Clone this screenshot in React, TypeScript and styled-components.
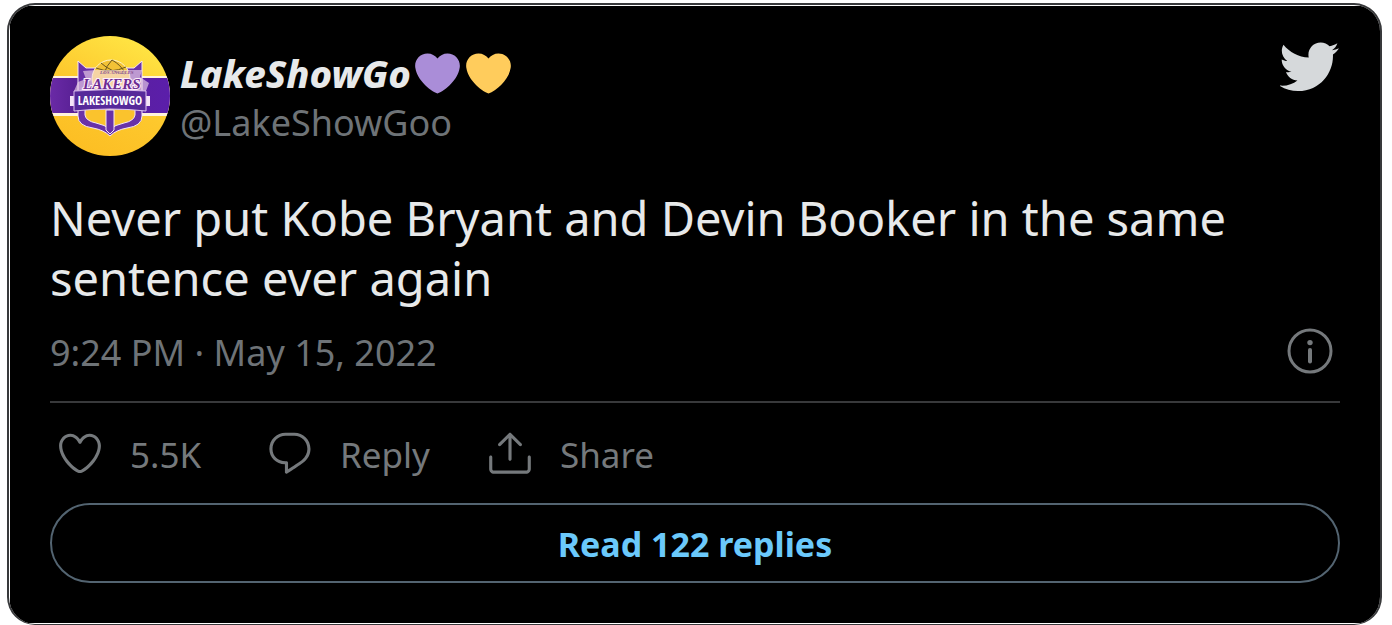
import React from "react";
import styled, { createGlobalStyle } from "styled-components";

const GlobalStyle = createGlobalStyle`
  * { box-sizing: border-box; }
  body {
    margin: 0;
    background: #ffffff;
    font-family: "Noto Sans", "Open Sans", sans-serif;
  }
`;

const Page = styled.main`
  padding: 3px 10px 0 7px;
`;

const Frame = styled.div`
  overflow: hidden;
  padding: 1px 0 1px 1px;
  border: 2px solid #38393b;
  border-bottom-width: 1px;
  border-radius: 28px;
  background: #ffffff;
`;

const Card = styled.article`
  padding: 30px 40px 40px;
  background: #000000;
`;

const Header = styled.header`
  display: flex;
  align-items: flex-start;
  gap: 10px;
`;

const Avatar = styled.svg`
  flex: none;
  width: 120px;
  height: 120px;
  border-radius: 50%;
`;

const Author = styled.div`
  display: flex;
  flex: 1;
  flex-direction: column;
  padding-top: 12px;
`;

const NameLink = styled.a`
  display: flex;
  align-items: center;
  gap: 4px;
  height: 50px;
  color: #e7e9ea;
  font-size: 38px;
  font-style: italic;
  font-weight: 800;
  line-height: 50px;
  text-decoration: none;
`;

const HeartGroup = styled.span`
  display: flex;
  gap: 6px;
`;

const HandleLink = styled.a`
  color: #6e7377;
  font-size: 36px;
  line-height: 50px;
  text-decoration: none;
`;

const LogoLink = styled.a`
  display: flex;
  color: #d6d9db;
`;

const Message = styled.p`
  margin: 32px 0 0;
  color: #e7e9ea;
  font-size: 47px;
  line-height: 60px;
`;

const Meta = styled.div`
  display: flex;
  align-items: center;
  justify-content: space-between;
  margin-top: 18px;
  padding: 0 5px 25px 0;
  border-bottom: 2px solid #38393b;
`;

const TimeLink = styled.a`
  padding-top: 4px;
  color: #6e7377;
  font-size: 36px;
  line-height: 46px;
  text-decoration: none;
`;

const IconButton = styled.button`
  display: flex;
  padding: 0;
  border: 0;
  background: none;
  color: #75797c;
`;

const Actions = styled.div`
  display: grid;
  grid-template-columns: 210px 220px auto;
  justify-content: start;
  padding: 25px 5px;
`;

const Action = styled.button`
  display: flex;
  align-items: center;
  gap: 25px;
  padding: 0;
  border: 0;
  background: none;
  color: #75797c;
  font-family: inherit;
  font-size: 35px;
  line-height: 46px;
`;

const ActionLabel = styled.span`
  padding-top: 4px;
`;

const Replies = styled.button`
  width: 100%;
  height: 80px;
  padding: 2px 0 0;
  border: 2px solid #536471;
  border-radius: 40px;
  background: none;
  color: #6bc9fb;
  font-family: inherit;
  font-size: 34px;
  font-weight: 700;
`;

const Icon = styled.svg<{ $size: number }>`
  display: block;
  flex: none;
  width: ${({ $size }) => $size}px;
  height: ${({ $size }) => $size}px;
  fill: currentColor;
`;

const HEART_EMOJI =
  "M35.885 11.833c0-5.45-4.418-9.868-9.867-9.868-3.308 0-6.227 1.633-8.018 4.129-1.791-2.496-4.71-4.129-8.017-4.129-5.45 0-9.868 4.417-9.868 9.868 0 .772.098 1.52.266 2.241C1.751 22.587 11.216 31.568 18 34.034c6.783-2.466 16.249-11.447 17.617-19.959.17-.721.268-1.469.268-2.242z";

const HeartEmoji = ({ color, label }: { color: string; label: string }) => (
  <Icon $size={45} viewBox="0 0 36 36" role="img" aria-label={label}>
    <path fill={color} d={HEART_EMOJI} />
  </Icon>
);

const BirdIcon = () => (
  <Icon $size={60} viewBox="1.2 0.3 22.8 22.8" aria-hidden="true">
    <path d="M23.643 4.937c-.835.37-1.732.62-2.675.733.962-.576 1.7-1.49 2.048-2.578-.9.534-1.897.922-2.958 1.13-.85-.904-2.06-1.47-3.4-1.47-2.572 0-4.658 2.086-4.658 4.66 0 .364.042.718.12 1.06-3.873-.195-7.304-2.05-9.602-4.868-.4.69-.63 1.49-.63 2.342 0 1.616.823 3.043 2.072 3.878-.764-.025-1.482-.234-2.11-.583v.06c0 2.257 1.605 4.14 3.737 4.568-.392.106-.803.162-1.227.162-.3 0-.593-.028-.877-.082.593 1.85 2.313 3.198 4.352 3.234-1.595 1.25-3.604 1.995-5.786 1.995-.376 0-.747-.022-1.112-.065 2.062 1.323 4.51 2.093 7.14 2.093 8.57 0 13.255-7.098 13.255-13.254 0-.2-.005-.402-.014-.602.91-.658 1.7-1.477 2.323-2.41z" />
  </Icon>
);

const InfoIcon = () => (
  <Icon $size={50} viewBox="0 0 50 50" aria-hidden="true">
    <circle cx="25" cy="25" r="21" fill="none" stroke="currentColor" strokeWidth="3" />
    <circle cx="25" cy="16.6" r="2.7" />
    <rect x="23" y="22" width="4" height="15.5" rx="2" />
  </Icon>
);

const LikeIcon = () => (
  <Icon $size={50} viewBox="0 0 24 24" aria-hidden="true">
    <path d="M12 21.638h-.014C9.403 21.59 1.95 14.856 1.95 8.478c0-3.064 2.525-5.754 5.403-5.754 2.29 0 3.83 1.58 4.646 2.73.814-1.148 2.354-2.73 4.645-2.73 2.88 0 5.404 2.69 5.404 5.755 0 6.376-7.454 13.11-10.037 13.157H12zM7.354 4.225c-2.08 0-3.903 1.988-3.903 4.255 0 5.74 7.034 11.596 8.55 11.658 1.518-.062 8.55-5.917 8.55-11.658 0-2.267-1.823-4.255-3.903-4.255-2.528 0-3.94 2.936-3.952 2.965-.23.562-1.156.562-1.387 0-.014-.03-1.425-2.965-3.954-2.965z" />
  </Icon>
);

const ReplyIcon = () => (
  <Icon $size={50} viewBox="0 0 24 24" aria-hidden="true">
    <path d="M14.046 2.242l-4.148-.01h-.002c-4.374 0-7.8 3.427-7.8 7.802 0 4.098 3.186 7.206 7.465 7.37v3.828c0 .108.044.286.12.403.142.225.384.347.632.347.138 0 .277-.038.402-.118.264-.168 6.473-4.14 8.088-5.506 1.902-1.61 3.04-3.97 3.043-6.312v-.017c-.006-4.367-3.43-7.787-7.8-7.788zm3.787 12.972c-1.134.96-4.862 3.405-6.772 4.643V16.67c0-.414-.335-.75-.75-.75h-.396c-3.66 0-6.318-2.476-6.318-5.886 0-3.534 2.768-6.302 6.3-6.302l4.147.01h.002c3.532 0 6.3 2.766 6.302 6.296-.003 1.91-.942 3.844-2.514 5.176z" />
  </Icon>
);

const ShareIcon = () => (
  <Icon $size={50} viewBox="0 0 24 24" aria-hidden="true">
    <path d="M17.53 7.47l-5-5c-.293-.293-.768-.293-1.06 0l-5 5c-.294.293-.294.768 0 1.06s.767.294 1.06 0l3.72-3.72V15c0 .414.336.75.75.75s.75-.336.75-.75V4.81l3.72 3.72c.146.147.338.22.53.22s.384-.072.53-.22c.293-.293.293-.767 0-1.06z" />
    <path d="M19.708 21.944H4.292C3.028 21.944 2 20.916 2 19.652V14c0-.414.336-.75.75-.75s.75.336.75.75v5.652c0 .437.355.792.792.792h15.416c.437 0 .792-.355.792-.792V14c0-.414.336-.75.75-.75s.75.336.75.75v5.652c0 1.264-1.028 2.292-2.292 2.292z" />
  </Icon>
);

const TeamAvatar = () => (
  <Avatar viewBox="0 0 120 120" role="img" aria-label="LakeShowGo avatar">
    <defs>
      <linearGradient id="gold" x1="0.2" y1="1" x2="0.7" y2="0">
        <stop offset="0" stopColor="#fcbd22" />
        <stop offset="0.5" stopColor="#fdc82d" />
        <stop offset="1" stopColor="#ffe544" />
      </linearGradient>
      <linearGradient id="violet" x1="0" y1="0" x2="1" y2="0">
        <stop offset="0" stopColor="#6a2aa6" />
        <stop offset="0.2" stopColor="#5a2196" />
        <stop offset="1" stopColor="#5b1eaa" />
      </linearGradient>
    </defs>
    <rect width="120" height="120" fill="url(#gold)" />
    <rect y="40" width="120" height="40" fill="#fff2dc" />
    <rect y="42" width="120" height="35" fill="url(#violet)" />
    <path
      d="M28 25l8 7h48l8-7v55q0 10-15 12-11 2-17 8-6-6-17-8-15-2-15-12z"
      fill="#6931a8"
      stroke="#f6e6f5"
      strokeWidth="1"
    />
    <path
      d="M35 73h50v6q-1 6-11 8-9 2-14 6-5-4-14-6-10-2-11-8z"
      fill="#fbc32d"
      stroke="#f6e6f5"
      strokeWidth="1"
    />
    <path d="M56 74h8v20l-4 4-4-4z" fill="#6931a8" stroke="#f6e6f5" strokeWidth="1" />
    <circle cx="61" cy="43" r="19" fill="#f2c236" stroke="#fff3c8" strokeWidth="1" />
    <path
      d="M46 32q15 6 30-1M51 27q10 9 24 11M62 24q-6 6-8 14M62 24q9 5 13 13"
      fill="none"
      stroke="#6a561f"
      strokeWidth="1"
    />
    <path d="M46 34h46l-2 7 9 6-3 8H24l4-9 8-3-3-8z" fill="#f7dfec" opacity="0.6" />
    <text x="50" y="38" fontFamily="Liberation Serif, serif" fontSize="5" fontWeight="700" fontStyle="italic" fill="#8a4f8f">
      LOS ANGELES
    </text>
    <text
      x="33"
      y="53"
      fontFamily="Liberation Serif, serif"
      fontSize="15"
      fontWeight="700"
      fontStyle="italic"
      fill="#6c2b92"
      stroke="#fdeefa"
      strokeWidth="2"
      paintOrder="stroke"
    >
      LAKERS
    </text>
    <rect x="20" y="60" width="80" height="10" fill="#f4e4f8" />
    <path d="M24 55q36-3 72 0v20q-36-4-72 0z" fill="#56299a" stroke="#dcc0ee" strokeWidth="1" />
    <text
      x="60"
      y="69"
      textAnchor="middle"
      fontFamily="Liberation Sans Narrow, Open Sans Condensed, Liberation Sans, sans-serif"
      fontSize="12"
      fontWeight="700"
      fill="#ffffff"
    >
      LAKESHOWGO
    </text>
  </Avatar>
);

export default function App() {
  return (
    <Page>
      <GlobalStyle />
      <Frame>
        <Card>
          <Header>
            <TeamAvatar />
            <Author>
              <NameLink href="#profile">
                LakeShowGo
                <HeartGroup>
                  <HeartEmoji color="#aa8dd8" label="purple heart" />
                  <HeartEmoji color="#ffcc5c" label="yellow heart" />
                </HeartGroup>
              </NameLink>
              <HandleLink href="#profile">@LakeShowGoo</HandleLink>
            </Author>
            <LogoLink href="#tweet" aria-label="View on Twitter">
              <BirdIcon />
            </LogoLink>
          </Header>
          <Message>Never put Kobe Bryant and Devin Booker in the same sentence ever again</Message>
          <Meta>
            <TimeLink href="#tweet">
              <time dateTime="2022-05-15T21:24">9:24 PM · May 15, 2022</time>
            </TimeLink>
            <IconButton type="button" aria-label="Twitter Ads info and privacy">
              <InfoIcon />
            </IconButton>
          </Meta>
          <Actions>
            <Action type="button" aria-label="Like, 5.5K likes">
              <LikeIcon />
              <ActionLabel>5.5K</ActionLabel>
            </Action>
            <Action type="button">
              <ReplyIcon />
              <ActionLabel>Reply</ActionLabel>
            </Action>
            <Action type="button">
              <ShareIcon />
              <ActionLabel>Share</ActionLabel>
            </Action>
          </Actions>
          <Replies type="button">Read 122 replies</Replies>
        </Card>
      </Frame>
    </Page>
  );
}
